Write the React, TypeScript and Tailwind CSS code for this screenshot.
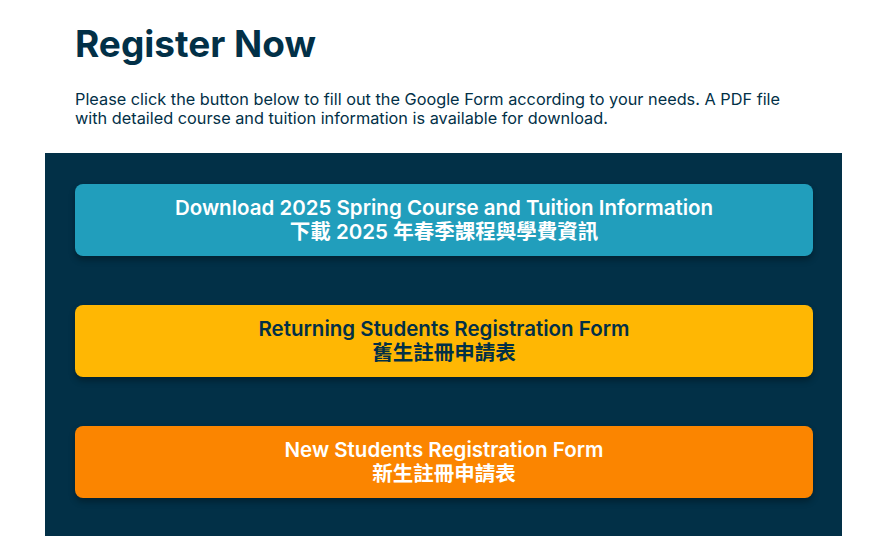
export default function App() {
  const font = { fontFamily: 'Inter, "Noto Sans CJK TC", sans-serif' };
  const btn = "h-[72px] rounded-[8px] flex flex-col items-center justify-center text-[20.5px] leading-[24px] font-semibold shadow-[0_4px_6px_rgba(0,0,0,0.3)]";
  return (
    <div className="w-[885px] h-[555px] bg-white overflow-hidden" style={font}>
      <div className="px-[45px] pt-[22px]">
        <div className="px-[30px]">
          <h1 className="text-[37px] leading-[44px] font-bold text-[#023047]">Register Now</h1>
          <p className="mt-[24px] text-[16.3px] leading-[19px] text-[#023047] w-[740px]">
            Please click the button below to fill out the Google Form according to your needs. A PDF file with detailed course and tuition information is available for download.
          </p>
        </div>
        <div className="mt-[25px] w-[797px] bg-[#023047] pl-[30px] pr-[29px] pt-[31px] pb-[38px] flex flex-col gap-[49px]">
          <a className={`${btn} bg-[#219ebc] text-white`}>
            <span>Download 2025 Spring Course and Tuition Information</span>
            <span>下載 2025 年春季課程與學費資訊</span>
          </a>
          <a className={`${btn} bg-[#ffb703] text-[#023047]`}>
            <span>Returning Students Registration Form</span>
            <span>舊生註冊申請表</span>
          </a>
          <a className={`${btn} bg-[#fb8500] text-white`}>
            <span>New Students Registration Form</span>
            <span>新生註冊申請表</span>
          </a>
        </div>
      </div>
    </div>
  );
}
